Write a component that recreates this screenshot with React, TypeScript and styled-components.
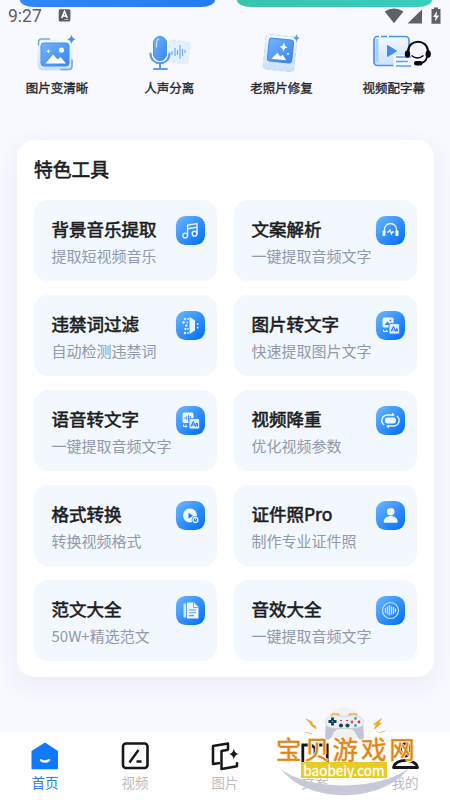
import React from "react";
import styled, { createGlobalStyle } from "styled-components";

const Global = createGlobalStyle`
  * { box-sizing: border-box; }
  body { margin: 0; background: #f8f9ff; }
`;

const Screen = styled.main`
  position: relative;
  width: 450px;
  height: 800px;
  overflow: hidden;
  display: flex;
  flex-direction: column;
  background: #f8f9ff;
  font-family: "Noto Sans CJK SC", sans-serif;
  color: #1c1c1e;
`;

const Banners = styled.div`
  display: flex;
  gap: 22px;
  padding: 0 18px 0 20px;
  height: 7px;
`;

const Banner = styled.div<{ $tone: string }>`
  flex: 1;
  height: 7px;
  border-radius: 0 0 14px 14px / 0 0 7px 7px;
  background: ${(p) => p.$tone};
`;

const StatusBar = styled.header`
  position: absolute;
  inset: 0 0 auto 0;
  height: 30px;
  display: flex;
  align-items: center;
  padding: 1px 8px 0;
  color: #5d5d61;
`;

const Clock = styled.span`
  font: 400 17.5px/20px Roboto, sans-serif;
  width: 50px;
`;

const StatusIcons = styled.div`
  margin-left: auto;
  display: flex;
`;

const Features = styled.section`
  display: grid;
  grid-template-columns: repeat(4, 1fr);
  padding: 23px 0 0 1px;
  height: 133px;
`;

const Feature = styled.div`
  display: flex;
  flex-direction: column;
  align-items: center;
  svg { display: block; }
`;

const FeatureLabel = styled.span`
  margin-top: 4px;
  font-size: 12.5px;
  line-height: 20px;
  font-weight: 400;
  color: #26262a;
  -webkit-text-stroke: 0.35px #26262a;
`;

const Headset = styled.div`
  position: absolute;
  left: 404px;
  top: 40px;
  svg { display: block; }
`;

const Panel = styled.section`
  margin: 0 16px 0 17px;
  height: 537px;
  padding: 16px 17px 0;
  border-radius: 17px;
  background: #fff;
  box-shadow: 0 8px 26px rgba(60, 60, 110, 0.075);
`;

const PanelTitle = styled.h2`
  margin: 0 0 19px;
  font-size: 18.8px;
  line-height: 25px;
  font-weight: 400;
  -webkit-text-stroke: 0.6px #1c1c1e;
`;

const Grid = styled.div`
  display: grid;
  grid-template-columns: 183px 183px;
  column-gap: 17px;
  row-gap: 14px;
`;

const Tile = styled.article`
  display: flex;
  justify-content: space-between;
  height: 81px;
  padding: 16px 12px 0 17.5px;
  border-radius: 14px;
  background: #f2f8fd;
  svg { display: block; flex: none; }
`;

const TileText = styled.div`
  width: 0;
  margin-top: -1px;
  white-space: nowrap;
`;

const TileTitle = styled.h3`
  margin: 0;
  font-size: 17.5px;
  line-height: 28px;
  font-weight: 400;
  -webkit-text-stroke: 0.6px #1c1c1e;
`;

const TileNote = styled.p`
  margin: 1px 0 0;
  font-size: 15px;
  line-height: 24px;
  color: #9099ad;
`;

const Nav = styled.nav`
  margin-top: auto;
  height: 68px;
  display: grid;
  grid-template-columns: repeat(5, 1fr);
  background: #fff;
`;

const NavItem = styled.div<{ $active?: boolean }>`
  display: flex;
  flex-direction: column;
  align-items: center;
  padding-top: 9px;
  font-size: 13.5px;
  line-height: 20px;
  color: ${(p) => (p.$active ? "#2b7bee" : "#bcbcc0")};
  svg { display: block; margin-bottom: 1px; }
`;

const Watermark = styled.aside`
  position: absolute;
  left: 265px;
  top: 700px;
  width: 160px;
  height: 100px;
`;

const WatermarkArt = styled.svg`
  position: absolute;
  inset: 0;
`;

const WatermarkName = styled.div`
  position: absolute;
  left: 11px;
  top: 28px;
  font-size: 25.5px;
  letter-spacing: 2.8px;
  line-height: 40px;
  white-space: nowrap;
  color: #df851b;
  -webkit-text-stroke: 0.3px #df851b;
  text-shadow: 1px 0 #fff4dc, -1px 0 #fff4dc, 0 1px #fff4dc, 0 -1px #fff4dc;
`;

const WatermarkUrl = styled.div`
  position: absolute;
  left: 36px;
  top: 62px;
  width: 86px;
  height: 16px;
  display: flex;
  align-items: center;
  justify-content: center;
  background: #e9cb26;
  color: #fff;
  font-size: 13.6px;
  line-height: 14px;
  padding-bottom: 1px;
  -webkit-text-stroke: 0.3px #fff;
`;

const FeatureDefs = () => (
  <svg width="0" height="0" style={{ position: "absolute" }}>
    <defs>
      <linearGradient id="photo" x1="0" y1="0" x2="1" y2="1">
        <stop stopColor="#72b6fc" />
        <stop offset="1" stopColor="#3684ed" />
      </linearGradient>
      <linearGradient id="pale" x1="0" y1="0" x2="0" y2="1">
        <stop stopColor="#f4f9ff" />
        <stop offset="1" stopColor="#c9e0fc" />
      </linearGradient>
      <linearGradient id="tile" x1="0" y1="0" x2="1" y2="1">
        <stop offset="0.1" stopColor="#62b0ff" />
        <stop offset="0.9" stopColor="#0873f8" />
      </linearGradient>
    </defs>
  </svg>
);

const EnhanceIcon = () => (
  <svg width="44" height="44" viewBox="35 30 44 44" fill="none">
    <rect x="37.500" y="38.500" width="35" height="32" rx="5" fill="url(#pale)" />
    <path d="M38.500 45v-3q0-3 3-3h8M72 60v6q0 3.500-3.500 3.500H61" stroke="#69a9ef" strokeWidth="1.500" strokeLinecap="round" />
    <rect x="41" y="43" width="28" height="23" rx="3" fill="url(#photo)" stroke="#4e90e7" />
    <path d="M45.500 63.500l7.500-9 4.500 5 3-2.500 5.500 6.500z" fill="#fff" />
    <circle cx="61.500" cy="50" r="2.600" fill="#fff" />
    <path d="M48.500 49l.7 1.500 1.500.7-1.500.7-.7 1.500-.7-1.500-1.500-.7 1.500-.7z" fill="#fff" />
    <path d="M71.500 34.500q.7 4.300 4.500 4.700-3.800.5-4.500 5-.7-4.500-4.500-5 3.800-.4 4.500-4.700z" fill="#4a8fe8" />
  </svg>
);

const VoiceIcon = () => (
  <svg width="44" height="44" viewBox="147 30 44 44" fill="none">
    <rect x="169" y="41" width="20" height="22" rx="2" transform="rotate(9 179 52)" fill="#e5f0fe" stroke="#cfe2fa" strokeWidth=".8" strokeDasharray="3 2" />
    <path d="M172 51v4M175 48v8M177.500 50v5M180 45v14M182.500 49v7M185 50v3" stroke="#75acf0" strokeWidth="1.200" />
    <rect x="153.500" y="36.500" width="13" height="24" rx="6.500" fill="url(#photo)" stroke="#4b90e9" />
    <path d="M150.500 53.500c0 13 19 13 19 0M160 63v5M154 69h13" stroke="#5b9cf1" strokeWidth="2" strokeLinecap="round" />
    <path d="M156.500 47v-4q0-3 2-4" stroke="#bfe0ff" strokeWidth="1.200" strokeLinecap="round" />
  </svg>
);

const RestoreIcon = () => (
  <svg width="44" height="44" viewBox="260 30 44 44" fill="none">
    <g transform="rotate(6 280 53)">
      <rect x="264.500" y="35.500" width="31" height="35" rx="3" fill="url(#pale)" stroke="#bed6f5" strokeWidth=".8" strokeDasharray="5 2" />
      <rect x="268" y="39" width="24.500" height="23" rx="3" fill="url(#photo)" stroke="#4387e4" />
      <path d="M272 59.500l5.500-6.500 3 3.500 2.500-2 4 5z" fill="#fff" />
      <path d="M283 42q.7 4.300 4 4.700-3.300.5-4 4.700-.7-4.200-4-4.700 3.300-.4 4-4.700z" fill="#fff" />
      <circle cx="288" cy="53" r="1.200" fill="#d8eaff" />
    </g>
    <path d="M296.500 34q.5 3.500 3.500 4-3 .5-3.500 4-.5-3.500-3.500-4 3-.5 3.500-4z" fill="#5798ec" />
  </svg>
);

const SubtitleIcon = () => (
  <svg width="44" height="44" viewBox="373 30 44 44" fill="none">
    <rect x="375" y="36.500" width="35" height="29" rx="3.500" fill="url(#pale)" stroke="#4c94f3" strokeWidth="1.700" />
    <path d="M378 39v23" stroke="#a7d0ff" strokeWidth="3" />
    <path d="M380 36.500h2M388 36.500h2" stroke="#f8f9ff" strokeWidth="2" />
    <path d="M388.500 45.500v11l9-5.500z" fill="#438bed" stroke="#438bed" strokeLinejoin="round" />
    <path d="M394.500 55H418v14h-23.500z" fill="#f5f9ff" />
    <path d="M397 57h15M397 61.500h12M397 66h15" stroke="#5e9df0" strokeWidth="1.600" />
  </svg>
);

const features = [
  { label: "图片变清晰", icon: <EnhanceIcon /> },
  { label: "人声分离", icon: <VoiceIcon /> },
  { label: "老照片修复", icon: <RestoreIcon /> },
  { label: "视频配字幕", icon: <SubtitleIcon /> },
];

const glyphs: Record<string, React.ReactNode> = {
  music: (
    <g stroke="#e9f5ff" strokeWidth="1.400">
      <circle cx="9.200" cy="19.500" r="2.400" />
      <circle cx="18.600" cy="17.700" r="2.400" />
      <path d="M11.600 19.500V9L21 7.500v10.200M11.600 12.700L21 11.200" />
    </g>
  ),
  headphones: (
    <g stroke="#e9f5ff" strokeWidth="1.300">
      <path d="M8.500 17v-3.500a6 6 0 0 1 12 0V17" />
      <path d="M8 14.500v5.500M21 14.500v5.500" strokeWidth="3" />
      <path d="M11 16h1.500l1.500-2 1.500 4 1-2H18" />
    </g>
  ),
  filter: (
    <g fill="#e9f5ff">
      <path d="M13.500 6l5.500 3.500v10L13.500 23z" />
      {[[9, 8], [7.500, 11.500], [10.500, 14.500], [9.500, 18], [9, 22]].map(([x, y]) => (
        <circle key={`${x}-${y}`} cx={x} cy={y} r="1.200" />
      ))}
      {[[12, 8], [11.300, 11.300], [12, 18], [12, 22], [21.700, 13], [21.700, 16.500]].map(([x, y]) => (
        <circle key={`${x}-${y}`} cx={x} cy={y} r=".9" />
      ))}
    </g>
  ),
  imageText: (
    <>
      <rect x="6.500" y="6.500" width="11" height="10" rx="1.500" fill="#ecf6ff" />
      <path d="M8.500 14l3-3.500 1.700 2 2.300-1V14z" fill="#3189ff" />
      <circle cx="14.500" cy="9.500" r=".9" fill="#3189ff" />
      <rect x="13" y="12.500" width="10.500" height="10.500" rx="1.500" fill="#d9ebff" stroke="#2d88fc" strokeWidth=".8" />
      <path d="M15 20.500l2.500-5 2.500 5M16 19h3M20 20.500l.8-3 1.200 3" stroke="#1478f5" />
      <path d="M7.500 18.500v2h4M10 19l1.800 1.500" stroke="#ecf6ff" />
    </>
  ),
  voiceText: (
    <>
      <rect x="6.500" y="6.500" width="11" height="10.500" rx="1.500" fill="#ecf6ff" />
      <path d="M9 11v2M10.800 10v4M12.500 9v6M14.300 10v4" stroke="#3189ff" strokeWidth=".9" />
      <rect x="13" y="12.500" width="10.500" height="10.500" rx="1.500" fill="#d9ebff" stroke="#2d88fc" strokeWidth=".8" />
      <path d="M15 20.500l2.300-5 2.200 5M16 19h2.700M20 20.500v-3h1.500v3" stroke="#1478f5" />
      <path d="M7.500 18.500v2h4M10 18.500v3" stroke="#ecf6ff" />
    </>
  ),
  convert: (
    <>
      <circle cx="14" cy="14.500" r="6.900" fill="#ecf6ff" />
      <path d="M12.500 11.700v6l4.500-3z" fill="#1b7ef9" />
      <circle cx="19.500" cy="19" r="3.800" fill="#1778f8" />
      <circle cx="19.500" cy="19" r="2.500" stroke="#e9f5ff" strokeWidth="1.300" />
      <path d="M19.500 17.800v1.400l1 .6" stroke="#e9f5ff" strokeWidth=".8" />
    </>
  ),
  loop: (
    <>
      <rect x="9" y="11.500" width="11" height="6" rx="2.500" fill="#e9f5ff" />
      <path d="M8.200 19C3.500 15.500 6.500 9 11.500 9h6M20.800 10c4.700 3.500 1.700 10-3.300 10h-6" stroke="#e9f5ff" strokeWidth="1.400" />
      <path d="M16 6.500l3 2.500-3 1.500zM13 22.500L10 20l3-1.500z" fill="#e9f5ff" />
    </>
  ),
  person: (
    <g fill="#ecf6ff">
      <circle cx="14.700" cy="10.700" r="3.800" />
      <path d="M7.700 21c0-8 14-8 14 0q0 .8-.8.800H8.500q-.8 0-.8-.8z" />
    </g>
  ),
  document: (
    <>
      <path d="M7.500 7.500h2.700v14H7.500z" fill="#d8ebff" />
      <path d="M11 6.500h7l4.500 4.500v11.500H11z" fill="#ecf6ff" />
      <path d="M17.500 7v4.500H22" stroke="#68adff" />
      <path d="M13 14h7M13 16.800h7M13 19.600h5" stroke="#559fff" strokeWidth="1.100" />
    </>
  ),
  wave: (
    <g stroke="#c9e5ff">
      <circle cx="14.500" cy="14.500" r="8" strokeWidth="1.200" />
      <path d="M9.500 12v5M11.500 10.500v8M13.500 9.500v10M15.500 10.500v8M17.500 11v7M19.500 12.500v4" strokeWidth="1.300" />
    </g>
  ),
};

const ToolIcon = ({ name }: { name: string }) => (
  <svg width="29" height="29" viewBox="0 0 29 29" fill="none">
    <rect width="29" height="29" rx="9.500" fill="url(#tile)" />
    {glyphs[name]}
  </svg>
);

const tools = [
  ["背景音乐提取", "提取短视频音乐", "music"],
  ["文案解析", "一键提取音频文字", "headphones"],
  ["违禁词过滤", "自动检测违禁词", "filter"],
  ["图片转文字", "快速提取图片文字", "imageText"],
  ["语音转文字", "一键提取音频文字", "voiceText"],
  ["视频降重", "优化视频参数", "loop"],
  ["格式转换", "转换视频格式", "convert"],
  ["证件照Pro", "制作专业证件照", "person"],
  ["范文大全", "50W+精选范文", "document"],
  ["音效大全", "一键提取音频文字", "wave"],
];

const navIcons: Record<string, React.ReactNode> = {
  首页: (
    <>
      <path d="M14 1.500L27 10v17.500q0 .8-.8.800H1.300q-.8 0-.8-.8V10z" fill="#1079fb" />
      <path d="M10 19.200q4 2.600 8 0" stroke="#fff" strokeWidth="2.300" strokeLinecap="round" />
    </>
  ),
  视频: (
    <g stroke="#17171a">
      <rect x="2" y="2.500" width="24.500" height="24.500" rx="3" strokeWidth="2.600" />
      <path d="M8.500 21.500l9-12.500M15.500 20.500h5" strokeWidth="2.400" />
    </g>
  ),
  图片: (
    <>
      <path d="M9 22l-7 1V5l15-2.500V9" stroke="#17171a" strokeWidth="2.500" strokeLinejoin="round" />
      <path d="M17.500 8.800L10.500 10v18l15.500-2.800v-4" stroke="#17171a" strokeWidth="2.500" strokeLinejoin="round" />
      <path d="M22.800 7.500q.9 5 5 5.500-4.100.7-5 5.500-.9-4.800-4.800-5.500 3.900-.5 4.800-5.500z" fill="#17171a" />
    </>
  ),
  文案: (
    <g stroke="#17171a" strokeWidth="2.800">
      <path d="M1.800 27V4h8.200l4 3 4-3h8.200v23z" />
      <path d="M14 8v8" />
    </g>
  ),
  我的: (
    <g stroke="#17171a" strokeWidth="2.800">
      <path d="M9.500 7.500c0-6 10-6 10 0 0 4.500-2.500 7.500-5 7.500s-5-3-5-7.500z" />
      <path d="M2.500 26.500c1-9.500 23-9.500 24 0z" strokeLinejoin="round" />
    </g>
  ),
};

export default function App() {
  return (
    <Screen>
      <Global />
      <FeatureDefs />
      <Banners>
        <Banner $tone="linear-gradient(90deg, #2c88fc, #247bf3)" />
        <Banner $tone="linear-gradient(90deg, #36c4ae, #37cfbd)" />
      </Banners>
      <StatusBar>
        <Clock>9:27</Clock>
        <svg width="13" height="13" viewBox="0 0 13 13">
          <rect x=".7" y=".2" width="11.700" height="12.300" rx="1.500" fill="#5d5d61" />
          <path d="M3.700 9l2.800-6.500L9.300 9M4.700 7h3.600" stroke="#fff" strokeWidth="1.500" fill="none" />
          <path d="M6.500 10.500h4" stroke="#ddd" strokeWidth=".7" />
        </svg>
        <StatusIcons>
          <svg width="58" height="18" viewBox="385 6 58 18">
            <path d="M385.700 10.500q9.300-6 18.700 0L395 22.300z" fill="#606064" />
            <path d="M423 8.500v14h-14.500z" fill="#606064" />
            <path d="M435 6.500h4V8h2.500v14.700h-9V8h2.500z" fill="#606064" />
            <path d="M438 10l-4 6h2.500l-.5 4.500 4.200-6h-2.700z" fill="#fff" />
          </svg>
        </StatusIcons>
      </StatusBar>
      <Features>
        {features.map((f) => (
          <Feature key={f.label}>
            {f.icon}
            <FeatureLabel>{f.label}</FeatureLabel>
          </Feature>
        ))}
      </Features>
      <Headset>
        <svg width="28" height="28" viewBox="404 40 28 28" fill="none" stroke="#0b0b0d">
          <path d="M408 51c1-12.500 19-12.500 20 0" strokeWidth="2" />
          <path d="M427 57q-1 5.500-7.500 6.500" strokeWidth="1.800" />
          <path d="M411.500 55.500q6 5 12 0" strokeWidth="1.500" />
          <ellipse cx="407.500" cy="54" rx="2.700" ry="3.800" fill="#0b0b0d" stroke="none" />
          <ellipse cx="428.200" cy="54" rx="2.700" ry="3.800" fill="#0b0b0d" stroke="none" />
          <rect x="414" y="61" width="8.500" height="4.500" rx="2.200" fill="#0b0b0d" stroke="none" />
        </svg>
      </Headset>
      <Panel>
        <PanelTitle>特色工具</PanelTitle>
        <Grid>
          {tools.map(([title, note, icon]) => (
            <Tile key={title}>
              <TileText>
                <TileTitle>{title}</TileTitle>
                <TileNote>{note}</TileNote>
              </TileText>
              <ToolIcon name={icon} />
            </Tile>
          ))}
        </Grid>
      </Panel>
      <Nav>
        {Object.entries(navIcons).map(([label, icon]) => (
          <NavItem key={label} $active={label === "首页"}>
            <svg width="28" height="30" viewBox="0 0 28 30" fill="none">{icon}</svg>
            {label}
          </NavItem>
        ))}
      </Nav>
      <Watermark>
        <WatermarkArt width="160" height="100" viewBox="0 0 160 100" fill="none">
          <circle cx="79.500" cy="25" r="17.500" fill="#f0f1f2" />
          <path d="M16 69c28 22 98 22 128-1-27 36-102 36-128 1z" fill="#c8c9d8" />
          <path d="M61 23l-1 13c0 5 5 5 7 0 2-4 3-7 8-7h9c5 0 6 3 8 7 2 5 7 5 7 0l-1-13z" fill="#c3c5d3" />
          <path d="M60.500 22.500c0-7 8-7.500 19-6 11-1.500 19-1 19 6 0 6-8 6-19 6s-19 0-19-6z" fill="#eceff5" stroke="#c6c8d6" strokeWidth=".6" />
          <path d="M66 15.500l2-1.500h5l1 1.500M84 15.500l1-1.500h6l1 1.500" stroke="#e8ae43" strokeWidth="1.500" />
          <path d="M67.500 17.500v8M63.500 21.500h8" stroke="#113e4e" strokeWidth="2.800" />
          <circle cx="67.500" cy="21.500" r="1" fill="#25a4b5" />
          <circle cx="76" cy="25.500" r="2.100" fill="#1e4455" />
          <circle cx="82.500" cy="25.500" r="2.100" fill="#1e4455" />
          <circle cx="87" cy="22" r="1.400" fill="#e14957" />
          <circle cx="94" cy="22" r="1.400" fill="#d13343" />
          <circle cx="90.500" cy="18.500" r="1.400" fill="#32aeb8" />
          <circle cx="90.500" cy="25.500" r="1.400" fill="#32aeb8" />
          <path d="M75 20.500h2M81 20.500h2" stroke="#d74452" />
          <path d="M41 19l6 3 .5 2.500 3 1.500.5 3-5-4-1-2zM116.500 18.500l-8 6 3-.5-2 5 7-6-3 .3zM40 32l7 2M113 33l7-2" fill="#efaa28" stroke="#efaa28" strokeWidth=".8" />
        </WatermarkArt>
        <WatermarkName>宝贝游戏网</WatermarkName>
        <WatermarkUrl>baobeiy.com</WatermarkUrl>
      </Watermark>
    </Screen>
  );
}
